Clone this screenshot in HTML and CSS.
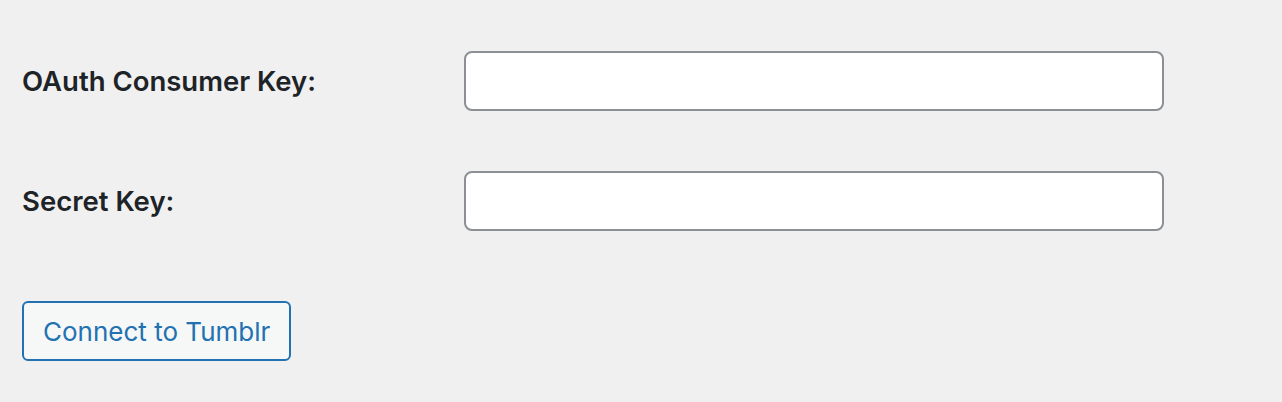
FILE: index.html
```
<!DOCTYPE html>
<html lang="en">
  <head>
    <meta charset="UTF-8" />
    <title>Tumblr settings</title>
    <link rel="stylesheet" href="styles.css">
  </head>
  <body>
    <form class="settings">
      <div class="form-table">
        <label class="field-label" for="consumer-key">OAuth Consumer Key:</label>
        <input class="regular-text" type="text" id="consumer-key" />

        <label class="field-label" for="secret-key">Secret Key:</label>
        <input class="regular-text" type="text" id="secret-key" />
      </div>
      <button type="button" class="button">Connect to Tumblr</button>
    </form>
  </body>
</html>
```

FILE: styles.css
```
body {
  margin: 0;
  background: #f0f0f1;
  color: #1d2327;
  font-family: Inter, "Liberation Sans", sans-serif;
}

.settings {
  padding: 51px 22px 0;
}

.form-table {
  display: grid;
  grid-template-columns: 442px 700px;
  row-gap: 60px;
  align-items: center;
}

.field-label {
  font-size: 27.5px;
  font-weight: 600;
}

.regular-text {
  box-sizing: border-box;
  width: 700px;
  height: 60px;
  margin: 0;
  padding: 0 16px;
  border: 2px solid #8c8f94;
  border-radius: 8px;
  background: #fff;
  font-family: inherit;
  font-size: 28px;
  outline: none;
}

.button {
  box-sizing: border-box;
  display: block;
  margin-top: 70px;
  height: 60px;
  padding: 0 19px;
  border: 2px solid #2271b1;
  border-radius: 6px;
  background: #f6f7f7;
  color: #2271b1;
  font-family: inherit;
  font-size: 26px;
  cursor: pointer;
}
```
